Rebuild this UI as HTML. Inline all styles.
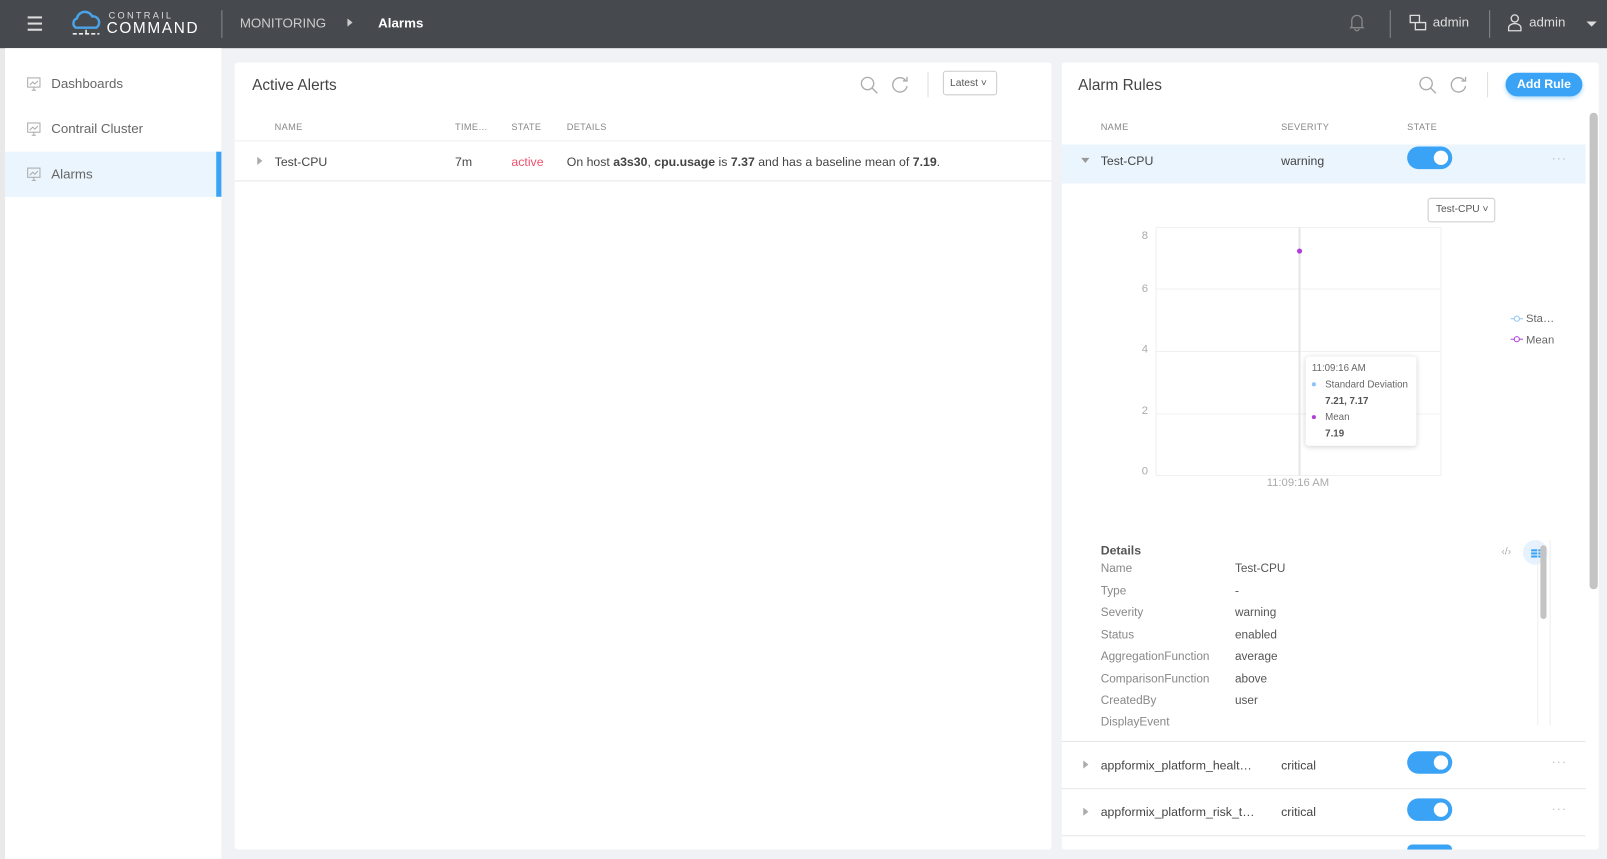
<!DOCTYPE html>
<html><head><meta charset="utf-8"><style>
*{box-sizing:border-box;margin:0;padding:0}
html,body{width:1607px;height:858px;overflow:hidden;background:#f0f2f5}
#w{position:absolute;left:0;top:0;width:1568px;height:838px;transform:scale(1.02487);transform-origin:0 0;font-family:"Liberation Sans",sans-serif;color:#444;font-size:12px}
.abs{position:absolute}
.hdr{left:0;top:0;width:1568px;height:47px;background:#464a4f}
.side{left:5px;top:47px;width:211px;height:791px;background:#fff}
.lstrip{left:0;top:0;width:5px;height:838px;background:#e9e9e9}
.nav{position:absolute;left:0;width:211px;height:44px;font-size:13px;color:#666;padding-left:45px;line-height:44px}
.card{background:#fff;border-radius:3px}
.th{font-size:9px;color:#888;letter-spacing:.3px}
.tog{width:44px;height:22px;border-radius:11px;background:#3aa3f5;position:absolute}
.tog:after{content:"";position:absolute;right:4px;top:4px;width:14px;height:14px;border-radius:7px;background:#fff}
.dots{position:absolute;color:#bbb;font-size:12px;letter-spacing:1px}
.dl{position:absolute;left:1074px;font-size:11.5px;color:#888}
.dv{position:absolute;left:1205px;font-size:11.5px;color:#555}
</style></head><body><div id="w">
<div class="abs lstrip"></div>
<div class="abs hdr">
 <div class="abs" style="left:27px;top:16px;width:14px;height:2px;background:#ddd;box-shadow:0 6px 0 #ddd,0 12px 0 #ddd"></div>
 <svg class="abs" style="left:68px;top:10px" width="32" height="26" viewBox="0 0 32 26"><path d="M6 17a5 5 0 0 1 1-9 8 8 0 0 1 15-2 6 6 0 0 1 4 11z" fill="none" stroke="#4aa3e8" stroke-width="2.4"/><path d="M3 23h26" stroke="#eee" stroke-width="1.5" stroke-dasharray="4 2"/><path d="M16 19v4" stroke="#eee" stroke-width="1.5"/></svg>
 <div class="abs" style="left:106px;top:10px;color:#ddd;font-size:9px;letter-spacing:2.2px">CONTRAIL</div>
 <div class="abs" style="left:104px;top:19px;color:#fff;font-size:15px;letter-spacing:1.6px">COMMAND</div>
 <div class="abs" style="left:216px;top:10px;width:1px;height:27px;background:#888"></div>
 <div class="abs" style="left:234px;top:15px;color:#ccc;font-size:13px">MONITORING</div>
 <div class="abs" style="left:339px;top:18px;width:0;height:0;border-left:5px solid #ccc;border-top:4px solid transparent;border-bottom:4px solid transparent"></div>
 <div class="abs" style="left:369px;top:15px;color:#fff;font-size:13px;font-weight:bold">Alarms</div>
 <svg class="abs" style="left:1315px;top:12px" width="18" height="20" viewBox="0 0 18 20"><path d="M4 14V8a5 5 0 0 1 10 0v6l1 1H3z M7 16a2 2 0 0 0 4 0" fill="none" stroke="#888" stroke-width="1.3"/></svg>
 <div class="abs" style="left:1356px;top:10px;width:1px;height:27px;background:#888"></div>
 <svg class="abs" style="left:1375px;top:14px" width="18" height="18" viewBox="0 0 18 18"><path d="M1 1h9v7H1z M6 8v7h10V8H10" fill="none" stroke="#ddd" stroke-width="1.3"/></svg>
 <div class="abs" style="left:1398px;top:14px;color:#ddd;font-size:13px">admin</div>
 <div class="abs" style="left:1453px;top:10px;width:1px;height:27px;background:#888"></div>
 <svg class="abs" style="left:1471px;top:13px" width="14" height="18" viewBox="0 0 14 18"><circle cx="7" cy="5" r="3.5" fill="none" stroke="#ddd" stroke-width="1.3"/><path d="M1 17v-3a6 4 0 0 1 12 0v3z" fill="none" stroke="#ddd" stroke-width="1.3"/></svg>
 <div class="abs" style="left:1492px;top:14px;color:#ddd;font-size:13px">admin</div>
 <div class="abs" style="left:1548px;top:21px;border-top:5px solid #ddd;border-left:5px solid transparent;border-right:5px solid transparent"></div>
</div>
<div class="abs side">
 <div class="nav" style="top:13px">Dashboards</div>
 <div class="nav" style="top:57px">Contrail Cluster</div>
 <div class="nav" style="top:101px;background:#eaf5fe">Alarms</div>
 <div class="abs" style="left:206px;top:101px;width:5px;height:44px;background:#3aa3f5"></div>
 <svg class="abs" style="left:21px;top:28px" width="14" height="14"><rect x="1" y="1" width="12" height="9" fill="none" stroke="#aaa"/><path d="M3 8l3-3 2 2 3-3M5 13h4M7 10v3" stroke="#aaa" fill="none"/></svg>
 <svg class="abs" style="left:21px;top:72px" width="14" height="14"><rect x="1" y="1" width="12" height="9" fill="none" stroke="#aaa"/><path d="M3 8l3-3 2 2 3-3M5 13h4M7 10v3" stroke="#aaa" fill="none"/></svg>
 <svg class="abs" style="left:21px;top:116px" width="14" height="14"><rect x="1" y="1" width="12" height="9" fill="none" stroke="#aaa"/><path d="M3 8l3-3 2 2 3-3M5 13h4M7 10v3" stroke="#aaa" fill="none"/></svg>
</div>

<div class="abs card" style="left:229px;top:61px;width:797px;height:768px"></div>
<div class="abs" style="left:246px;top:75px;font-size:15px;color:#444">Active Alerts</div>
<svg class="abs" style="left:839px;top:74px" width="18" height="18"><circle cx="7.5" cy="7.5" r="6" fill="none" stroke="#aaa" stroke-width="1.3"/><path d="M12 12l5 5" stroke="#aaa" stroke-width="1.3"/></svg>
<svg class="abs" style="left:870px;top:74px" width="18" height="18"><path d="M14 5A7 7 0 1 0 15 10" fill="none" stroke="#aaa" stroke-width="1.3"/><path d="M11 5h4V1" fill="none" stroke="#aaa" stroke-width="1.3"/></svg>
<div class="abs" style="left:905px;top:70px;width:1px;height:25px;background:#ddd"></div>
<div class="abs" style="left:920px;top:69px;width:53px;height:24px;border:1px solid #ccc;border-radius:3px;font-size:10px;color:#555;padding:6px 0 0 6px">Latest ˅</div>
<div class="abs th" style="left:268px;top:119px">NAME</div>
<div class="abs th" style="left:444px;top:119px">TIME…</div>
<div class="abs th" style="left:499px;top:119px">STATE</div>
<div class="abs th" style="left:553px;top:119px">DETAILS</div>
<div class="abs" style="left:229px;top:137px;width:797px;height:1px;background:#eee"></div>
<div class="abs" style="left:251px;top:153px;border-left:5px solid #aaa;border-top:4px solid transparent;border-bottom:4px solid transparent"></div>
<div class="abs" style="left:268px;top:151px;font-size:12px">Test-CPU</div>
<div class="abs" style="left:444px;top:151px;font-size:12px">7m</div>
<div class="abs" style="left:499px;top:151px;font-size:12px;color:#f0506e">active</div>
<div class="abs" style="left:553px;top:151px;font-size:12px">On host <b>a3s30</b>, <b>cpu.usage</b> is <b>7.37</b> and has a baseline mean of <b>7.19</b>.</div>
<div class="abs" style="left:229px;top:176px;width:797px;height:1px;background:#e6e6e6"></div>

<div class="abs card" style="left:1036px;top:61px;width:524px;height:768px"></div>
<div class="abs" style="left:1052px;top:75px;font-size:15px;color:#444">Alarm Rules</div>
<svg class="abs" style="left:1384px;top:74px" width="18" height="18"><circle cx="7.5" cy="7.5" r="6" fill="none" stroke="#aaa" stroke-width="1.3"/><path d="M12 12l5 5" stroke="#aaa" stroke-width="1.3"/></svg>
<svg class="abs" style="left:1415px;top:74px" width="18" height="18"><path d="M14 5A7 7 0 1 0 15 10" fill="none" stroke="#aaa" stroke-width="1.3"/><path d="M11 5h4V1" fill="none" stroke="#aaa" stroke-width="1.3"/></svg>
<div class="abs" style="left:1451px;top:70px;width:1px;height:25px;background:#ddd"></div>
<div class="abs" style="left:1469px;top:71px;width:75px;height:23px;border-radius:12px;background:#3aa3f5;color:#fff;font-size:12px;font-weight:bold;text-align:center;line-height:23px;box-shadow:0 2px 4px rgba(58,163,245,.4)">Add Rule</div>
<div class="abs" style="left:1551px;top:110px;width:8px;height:465px;background:#c4c4c4;border-radius:4px"></div>
<div class="abs th" style="left:1074px;top:119px">NAME</div>
<div class="abs th" style="left:1250px;top:119px">SEVERITY</div>
<div class="abs th" style="left:1373px;top:119px">STATE</div>
<div class="abs" style="left:1036px;top:141px;width:511px;height:38px;background:#eaf5fe"></div>
<div class="abs" style="left:1055px;top:154px;border-top:5px solid #999;border-left:4px solid transparent;border-right:4px solid transparent"></div>
<div class="abs" style="left:1074px;top:150px;font-size:12px">Test-CPU</div>
<div class="abs" style="left:1250px;top:150px;font-size:12px">warning</div>
<div class="tog" style="left:1373px;top:143px"></div>
<div class="dots" style="left:1514px;top:147px">···</div>
<div class="abs" style="left:1393px;top:193px;width:66px;height:24px;border:1px solid #ccc;border-radius:3px;font-size:10px;color:#555;padding:5px 0 0 7px">Test-CPU ˅</div>
<svg class="abs" style="left:1090px;top:215px" width="460" height="270">
 <g stroke="#f0f0f0"><line x1="38" y1="7" x2="316" y2="7"/><line x1="38" y1="67" x2="316" y2="67"/><line x1="38" y1="128" x2="316" y2="128"/><line x1="38" y1="189" x2="316" y2="189"/><line x1="38" y1="249" x2="316" y2="249"/><line x1="38" y1="7" x2="38" y2="249"/><line x1="316" y1="7" x2="316" y2="249"/></g>
 <line x1="178" y1="7" x2="178" y2="249" stroke="#e6e6e6" stroke-width="2"/>
 <circle cx="178" cy="30" r="2.5" fill="#b040d8"/>
 <g font-size="11" fill="#aaa" font-family="Liberation Sans"><text x="24" y="18">8</text><text x="24" y="70">6</text><text x="24" y="129">4</text><text x="24" y="189">2</text><text x="24" y="248">0</text><text x="146" y="259">11:09:16 AM</text></g>
 <g font-size="11" fill="#666" font-family="Liberation Sans"><path d="M384 96h12" stroke="#8cc4f5"/><circle cx="390" cy="96" r="2.5" fill="#fff" stroke="#8cc4f5"/><text x="399" y="99">Sta…</text><path d="M384 116h12" stroke="#b040d8"/><circle cx="390" cy="116" r="2.5" fill="#fff" stroke="#b040d8"/><text x="399" y="120">Mean</text></g>
</svg>
<div class="abs" style="left:1274px;top:348px;width:108px;height:87px;background:#fff;border-radius:3px;box-shadow:0 1px 5px rgba(0,0,0,.18);font-size:9.5px;color:#666">
 <div class="abs" style="left:6px;top:6px">11:09:16 AM</div>
 <div class="abs" style="left:6px;top:25px;width:4px;height:4px;border-radius:2px;background:#8cc4f5"></div>
 <div class="abs" style="left:19px;top:22px">Standard Deviation</div>
 <div class="abs" style="left:19px;top:38px;font-weight:bold;color:#555">7.21, 7.17</div>
 <div class="abs" style="left:6px;top:57px;width:4px;height:4px;border-radius:2px;background:#b040d8"></div>
 <div class="abs" style="left:19px;top:54px">Mean</div>
 <div class="abs" style="left:19px;top:70px;font-weight:bold;color:#555">7.19</div>
</div>
<div class="abs" style="left:1074px;top:530px;font-size:12px;font-weight:bold;color:#555">Details</div>
<div class="abs" style="left:1465px;top:533px;font-size:10px;color:#aaa">‹/›</div>
<div class="abs" style="left:1486px;top:527px;width:24px;height:24px;border-radius:12px;background:#e6f2fd"></div>
<div class="abs" style="left:1494px;top:536px;width:9px;height:1.5px;background:#3aa3f5;box-shadow:0 3px 0 #3aa3f5,0 6px 0 #3aa3f5"></div>
<div class="abs" style="left:1500px;top:527px;width:13px;height:181px;border-left:1px solid #eee;border-right:1px solid #eee"></div>
<div class="abs" style="left:1503px;top:532px;width:6px;height:72px;border-radius:3px;background:#c4c4c4"></div>
<div style="position:absolute;left:0;top:0;width:1568px;height:710px;overflow:hidden">
<div class="dl" style="top:549px">Name</div><div class="dv" style="top:549px">Test-CPU</div>
<div class="dl" style="top:571px">Type</div><div class="dv" style="top:571px">-</div>
<div class="dl" style="top:592px">Severity</div><div class="dv" style="top:592px">warning</div>
<div class="dl" style="top:614px">Status</div><div class="dv" style="top:614px">enabled</div>
<div class="dl" style="top:635px">AggregationFunction</div><div class="dv" style="top:635px">average</div>
<div class="dl" style="top:657px">ComparisonFunction</div><div class="dv" style="top:657px">above</div>
<div class="dl" style="top:678px">CreatedBy</div><div class="dv" style="top:678px">user</div>
<div class="dl" style="top:699px">DisplayEvent</div>
</div>
<div class="abs" style="left:1036px;top:723px;width:511px;height:1px;background:#e6e6e6"></div>
<div class="abs" style="left:1057px;top:742px;border-left:5px solid #aaa;border-top:4px solid transparent;border-bottom:4px solid transparent"></div>
<div class="abs" style="left:1074px;top:740px;font-size:12px">appformix_platform_healt…</div>
<div class="abs" style="left:1250px;top:740px;font-size:12px">critical</div>
<div class="tog" style="left:1373px;top:733px"></div>
<div class="dots" style="left:1514px;top:736px">···</div>
<div class="abs" style="left:1036px;top:769px;width:511px;height:1px;background:#e6e6e6"></div>
<div class="abs" style="left:1057px;top:788px;border-left:5px solid #aaa;border-top:4px solid transparent;border-bottom:4px solid transparent"></div>
<div class="abs" style="left:1074px;top:785px;font-size:12px">appformix_platform_risk_t…</div>
<div class="abs" style="left:1250px;top:785px;font-size:12px">critical</div>
<div class="tog" style="left:1373px;top:779px"></div>
<div class="dots" style="left:1514px;top:782px">···</div>
<div class="abs" style="left:1036px;top:815px;width:511px;height:1px;background:#e6e6e6"></div>
<div class="abs" style="left:1373px;top:824px;width:44px;height:5px;border-radius:11px 11px 0 0;background:#3aa3f5"></div>
<div class="abs" style="left:216px;top:829px;width:1352px;height:9px;background:#f0f2f5"></div>
</div></body></html>
